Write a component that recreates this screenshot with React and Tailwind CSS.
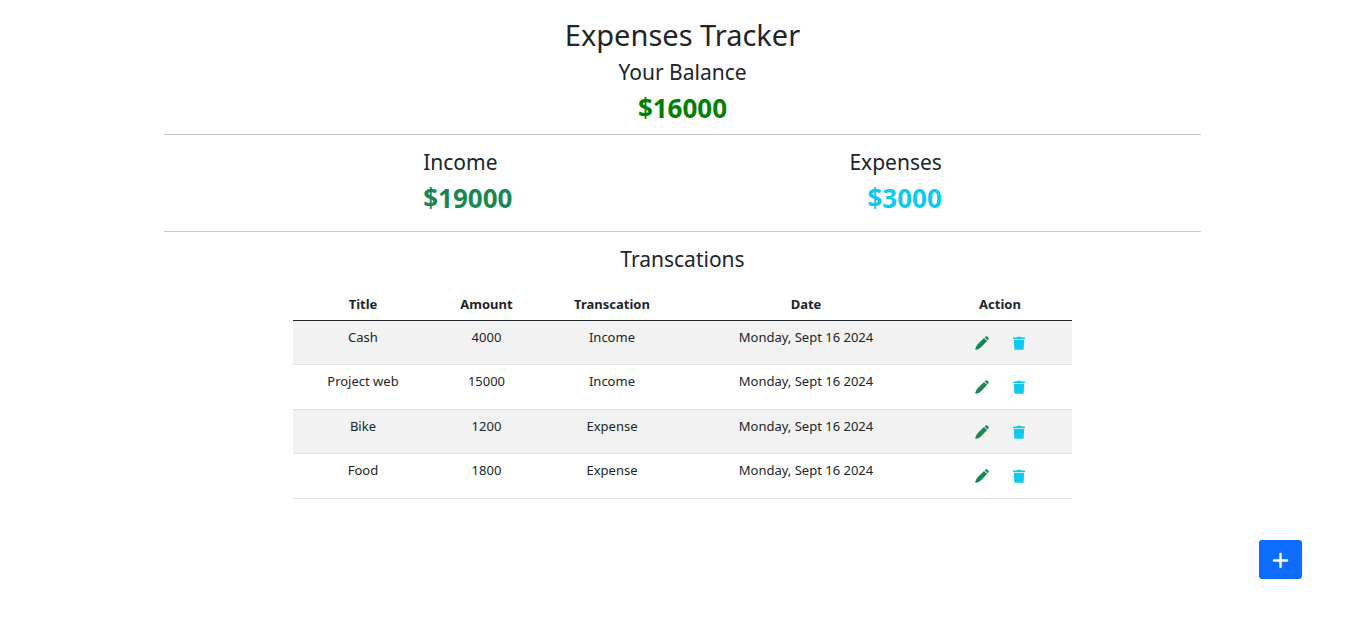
import { FaPlus } from "react-icons/fa6";

const transactions = [
  { title: "Cash", amount: 4000, type: "Income", date: "Monday, Sept 16 2024" },
  { title: "Project web", amount: 15000, type: "Income", date: "Monday, Sept 16 2024" },
  { title: "Bike", amount: 1200, type: "Expense", date: "Monday, Sept 16 2024" },
  { title: "Food", amount: 1800, type: "Expense", date: "Monday, Sept 16 2024" },
];

function PenIcon() {
  return (
    <svg viewBox="0 0 14 14" width="14" height="14" fill="currentColor" aria-hidden="true">
      <path d="M9.6 1.3 10.3.7a2.2 2.2 0 0 1 3 3l-.6.7z" />
      <path d="M9 1.9 12.1 5 5.8 11.4Q4 13 1.1 13.7 0 13.9.3 12.8 1 10 2.6 8.2z" />
    </svg>
  );
}

function TrashIcon() {
  return (
    <svg viewBox="0 0 12 14" width="12" height="14" fill="currentColor" aria-hidden="true">
      <path d="M4 .8h4l.5.6h2.9q.6 0 .6.5v1.1H0V1.900q0-.5.6-.5h2.9z" />
      <path d="M.8 3.700h10.400l-.6 9.600q-.1.5-.6.5H2q-.5 0-.6-.5z" />
    </svg>
  );
}

export default function App() {
  return (
    <div className="bg-white font-['Noto_Sans',sans-serif] text-[#212529]">
      <main className="mx-auto w-[76%] pt-4 text-center">
        <header className="border-b border-[#c8c9ca] pb-1.5">
          <h1 className="mb-0.5 text-[29px] leading-[38px]">Expenses Tracker</h1>
          <h2 className="text-[21px] leading-8">Your Balance</h2>
          <p className="text-[26px] leading-10 font-bold text-[#008000]">$16000</p>
        </header>

        <section className="flex border-b border-[#c8c9ca] px-[25%] pt-[11px] pb-[13px]">
          <div className="flex-1 text-left">
            <h2 className="text-[21px] leading-8">Income</h2>
            <p className="text-[26px] leading-10 font-bold text-[#198754]">$19000</p>
          </div>
          <div className="flex-1 text-right">
            <h2 className="text-[21px] leading-8">Expenses</h2>
            <p className="text-[26px] leading-10 font-bold text-[#0dcaf0]">$3000</p>
          </div>
        </section>

        <section className="pt-[11px]">
          <h2 className="mb-[13px] text-[21px] leading-8">Transcations</h2>
          <table className="mx-auto w-3/4 table-fixed border-collapse text-[13px] leading-5">
            <thead>
              <tr className="border-b border-[#212529]">
                <th className="w-[139px] p-1.5">Title</th>
                <th className="w-[108px] p-1.5">Amount</th>
                <th className="w-[143px] p-1.5">Transcation</th>
                <th className="p-1.5">Date</th>
                <th className="w-[143px] p-1.5">Action</th>
              </tr>
            </thead>
            <tbody>
              {transactions.map((item) => (
                <tr
                  key={item.title}
                  className="h-11 border-b border-[#dee2e6] align-top odd:bg-[#f2f2f2] even:h-[45px]"
                >
                  <td className="p-1.5">{item.title}</td>
                  <td className="p-1.5">{item.amount}</td>
                  <td className="p-1.5">{item.type}</td>
                  <td className="p-1.5">{item.date}</td>
                  <td className="px-1.5 pt-1.5">
                    <div className="flex h-8 items-center justify-center gap-6">
                      <button type="button" aria-label={`Edit ${item.title}`} className="text-[#198754]">
                        <PenIcon />
                      </button>
                      <button type="button" aria-label={`Delete ${item.title}`} className="text-[#0dcaf0]">
                        <TrashIcon />
                      </button>
                    </div>
                  </td>
                </tr>
              ))}
            </tbody>
          </table>
        </section>
      </main>

      <button
        type="button"
        aria-label="Add transaction"
        className="fixed right-[63px] bottom-[63px] flex h-[39px] w-[43px] items-center justify-center rounded-[3px] bg-[#0d6efd] pt-0.5 text-white"
      >
        <FaPlus size={19} />
      </button>
    </div>
  );
}
